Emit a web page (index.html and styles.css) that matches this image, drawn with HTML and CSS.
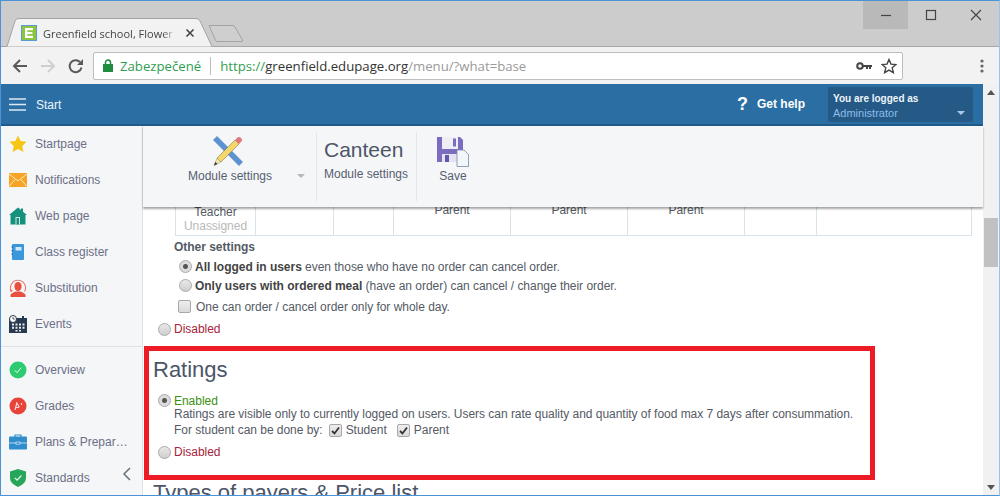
FILE: index.html
```html
<!DOCTYPE html>
<html lang="en">
<head>
<meta charset="utf-8">
<title>Greenfield school, Flower</title>
<link rel="stylesheet" href="styles.css">
</head>
<body>
<div class="window">
  <div class="tabstrip">
    <div class="tab">
      <svg class="tab-shape" width="214" height="29" viewBox="0 0 214 29"><path d="M0 28.500H6L14 3Q15 .5 18 .5H195Q198 .5 199 3L211 28.500H214" fill="#f2f2f2" stroke="#a3a3a3"/></svg>
      <svg class="favicon" width="16" height="16" viewBox="0 0 16 16"><rect x=".5" y=".5" width="15" height="15" fill="#8cc63f" stroke="#5b9bd5"/><path d="M4 3h8v2.2H6.4v1.7h5v2.2h-5v1.7H12V13H4z" fill="#fff"/></svg>
      <span class="tab-title">Greenfield school, Flower</span>
      <svg class="tab-close" width="10" height="10" viewBox="0 0 10 10"><path d="M1.500 1.500l7 7M8.500 1.500l-7 7" stroke="#444" stroke-width="1.600"/></svg>
    </div>
    <svg class="newtab" width="36" height="18" viewBox="0 0 36 18"><path d="M1 .5H25Q26 .5 27 2L34.500 15Q35 16.500 33 16.500H9Q8 16.500 7.500 15z" fill="#cfcfcf" stroke="#a3a3a3"/></svg>
    <div class="winctl">
      <span class="winbtn winbtn-hover"><svg width="12" height="12" viewBox="0 0 12 12"><path d="M1 6.500h10" stroke="#444" stroke-width="1.200"/></svg></span>
      <span class="winbtn"><svg width="12" height="12" viewBox="0 0 12 12"><rect x="1.500" y="1.500" width="9" height="9" fill="none" stroke="#444" stroke-width="1.200"/></svg></span>
      <span class="winbtn"><svg width="12" height="12" viewBox="0 0 12 12"><path d="M1 1l10 10M11 1L1 11" stroke="#444" stroke-width="1.200"/></svg></span>
    </div>
  </div>
  <div class="toolbar">
    <svg class="nav" width="16" height="16" viewBox="0 0 16 16"><path d="M15 8H2M8 2L2 8l6 6" fill="none" stroke="#5a5a5a" stroke-width="2"/></svg>
    <svg class="nav" width="16" height="16" viewBox="0 0 16 16"><path d="M1 8h13M8 2l6 6-6 6" fill="none" stroke="#cfcfcf" stroke-width="2"/></svg>
    <svg class="nav nav-last" width="16" height="16" viewBox="0 0 16 16"><path d="M13.500 9.500A6 6 0 1 1 12 4" fill="none" stroke="#5a5a5a" stroke-width="2"/><path d="M15 1v6H9z" fill="#5a5a5a"/></svg>
    <div class="omnibox">
      <svg width="10" height="13" viewBox="0 0 10 13"><rect x="0" y="5" width="10" height="8" fill="#1e8e3e"/><path d="M2.500 5.500V3.500a2.500 2.500 0 0 1 5 0v2" fill="none" stroke="#1e8e3e" stroke-width="1.500"/></svg>
      <span class="secure">Zabezpečené</span>
      <span class="omni-sep"></span>
      <span class="url"><span class="url-scheme">https://</span><span class="url-host">greenfield.edupage.org</span>/menu/?what=base</span>
      <svg class="omni-key" width="16" height="10" viewBox="0 0 16 10"><circle cx="4" cy="5" r="2.800" fill="none" stroke="#444" stroke-width="2"/><path d="M7 4h9v2h-1v2h-2V6h-1v2h-2V6H7z" fill="#444"/></svg>
      <svg class="omni-star" width="16" height="16" viewBox="0 0 16 16"><path d="M8 1.500l2 4.600 5 .4-3.800 3.300 1.200 4.900L8 12.100l-4.400 2.600 1.200-4.900L1 6.500l5-.4z" fill="none" stroke="#444" stroke-width="1.400"/></svg>
    </div>
    <svg class="menu-dots" width="4" height="14" viewBox="0 0 4 14"><circle cx="2" cy="2" r="1.600" fill="#666"/><circle cx="2" cy="7" r="1.600" fill="#666"/><circle cx="2" cy="12" r="1.600" fill="#666"/></svg>
  </div>
  <div class="viewport">
    <div class="page">
      <header class="appbar">
        <svg class="burger" width="17" height="13" viewBox="0 0 17 13"><path d="M0 1h17M0 6.500h17M0 12h17" stroke="#dce9f3" stroke-width="1.600"/></svg>
        <span class="appbar-start">Start</span>
        <span class="help-mark">?</span>
        <span class="help-text">Get help</span>
        <div class="login">
          <div class="login-title">You are logged as</div>
          <div class="login-name">Administrator</div>
          <span class="login-caret"></span>
        </div>
      </header>
      <div class="body">
        <nav class="sidebar">
          <a class="side-item"><svg width="18" height="18" viewBox="0 0 18 18"><path d="M9 .5l2.600 5.600 6 .7-4.400 4.100 1.200 6L9 14l-5.400 2.900 1.200-6L.4 6.800l6-.7z" fill="#f6c516"/></svg>Startpage</a>
          <a class="side-item"><svg width="18" height="18" viewBox="0 0 18 18"><rect y="2" width="18" height="14" fill="#f5a425"/><path d="M0 3l9 7 9-7M0 15.500l6.500-7.500M18 15.500L11.500 8" fill="none" stroke="#fde6bd" stroke-width="1"/></svg>Notifications</a>
          <a class="side-item"><svg width="18" height="18" viewBox="0 0 18 18"><path d="M9 .5l3 2.500V1.500h2v3.200l4 3.300h-1.500v9.500h-15V8H0z" fill="#14917d"/><rect x="6.500" y="10" width="4.500" height="7.500" fill="#cfe8e3"/><rect x="7.500" y="11" width="2.500" height="6.500" fill="#14917d"/></svg>Web page</a>
          <a class="side-item"><svg width="18" height="18" viewBox="0 0 18 18"><rect x="3" y="1" width="12" height="16" rx="1" fill="#3a97dc"/><rect x="2.500" y="3.500" width="1.500" height="1.200" fill="#1d6fae"/><rect x="2.500" y="7" width="1.500" height="1.200" fill="#1d6fae"/><rect x="2.500" y="10.500" width="1.500" height="1.200" fill="#1d6fae"/><rect x="6.500" y="4" width="6" height="3.500" fill="#d5e9f8"/></svg>Class register</a>
          <a class="side-item"><svg width="18" height="18" viewBox="0 0 18 18"><path d="M2.500 12.500a7.500 7.500 0 1 1 13 0" fill="none" stroke="#ee7a6b" stroke-width="1.100"/><path d="M.5 10.500l3.500.5-2 2.500z" fill="#ee7a6b"/><ellipse cx="9" cy="7.500" rx="3.600" ry="4.600" fill="#e9503e"/><path d="M1.500 18v-2q0-1.500 5-3.500h5q5 2 5 3.500v2z" fill="#e9503e"/></svg>Substitution</a>
          <a class="side-item"><svg width="18" height="18" viewBox="0 0 18 18"><rect y="3" width="18" height="15" fill="#2a3b4f"/><path d="M3 8.500h2v2H3zM6.500 8.500h2v2h-2zM10 8.500h2v2h-2zM13.500 8.500h2v2h-2zM3 11.800h2v2H3zM6.500 11.800h2v2h-2zM10 11.800h2v2h-2zM13.500 11.800h2v2h-2zM6.500 15h2v1.500h-2zM10 15h2v1.500h-2z" fill="#e8edf2"/><rect x="13" y="1" width="2" height="3.500" fill="#2a3b4f"/><circle cx="4" cy="4" r="3.500" fill="#fff" stroke="#2a3b4f"/><path d="M4 2v2h1.800" fill="none" stroke="#2a3b4f" stroke-width=".8"/></svg>Events</a>
          <div class="side-sep"></div>
          <a class="side-item"><svg width="18" height="18" viewBox="0 0 18 18"><circle cx="9" cy="9" r="8.500" fill="#2ecc71"/><path d="M5.800 9.300l2.200 2.300 4.200-4.800" fill="none" stroke="#e8f9ef" stroke-width="1"/></svg>Overview</a>
          <a class="side-item"><svg width="18" height="18" viewBox="0 0 18 18"><circle cx="9" cy="9" r="8.500" fill="#e8433a"/><path d="M6 13l1.800-7 2.600 4.200M7 10.500h3M12.500 6v2" fill="none" stroke="#fbdcd9" stroke-width="1.100"/></svg>Grades</a>
          <a class="side-item"><svg width="18" height="18" viewBox="0 0 18 18"><path d="M6 4V2h6v2" fill="none" stroke="#2f8dcb" stroke-width="1.200"/><rect y="3.500" width="18" height="13" rx="1" fill="#2f8dcb"/><path d="M0 10h18" stroke="#d8ecf8" stroke-width=".8"/><rect x="7" y="9" width="4" height="2.200" fill="#2f8dcb" stroke="#d8ecf8" stroke-width=".7"/></svg>Plans &amp; Prepar…</a>
          <a class="side-item"><svg width="18" height="18" viewBox="0 0 18 18"><path d="M9 0l8 2.500V9q0 5.500-8 9-8-3.500-8-9V2.500z" fill="#26a65b"/><path d="M5.800 8.800l2.300 2.300 4.300-4.600" fill="none" stroke="#e8f9ef" stroke-width="1.200"/></svg>Standards</a>
          <svg class="side-collapse" width="9" height="14" viewBox="0 0 9 14"><path d="M8 1L2 7l6 6" fill="none" stroke="#66707c" stroke-width="1.500"/></svg>
        </nav>
        <main class="main">
          <div class="ribbon">
            <div class="rb-group rb-module">
              <svg width="30" height="30" viewBox="0 0 30 30"><path d="M4 .5L.5 4 26 29.500l3.500-3.500z" fill="#5b92d6" stroke="#4573ac" stroke-width=".6"/><path d="M4 22L22 4l4 4L8 26z" fill="#f5d66c" stroke="#8a7a3a" stroke-width=".6"/><path d="M22 4l2-2a2.500 2.500 0 0 1 4 4l-2 2z" fill="#e0787c"/><path d="M4 22l-3 7.500L8 26z" fill="#f0e2b8" stroke="#8a7a3a" stroke-width=".4"/><path d="M2.300 26l-1.300 3.500L4.500 28z" fill="#333"/></svg>
              <div class="rb-label-row"><span class="rb-label">Module settings</span><span class="rb-caret"></span></div>
            </div>
            <div class="rb-group rb-title">
              <div class="rb-big">Canteen</div>
              <div class="rb-label">Module settings</div>
            </div>
            <div class="rb-group rb-save">
              <svg width="32" height="31" viewBox="0 0 32 31"><path d="M0 1h23l3 3v22H0z" fill="#7b6cc0"/><rect x="5" y="1" width="16" height="12" fill="#eeeef6"/><rect x="16" y="2.500" width="3" height="8" fill="#7b6cc0"/><rect x="5" y="18" width="15" height="8" fill="#e4e2f2"/><rect x="8" y="19" width="4" height="7" fill="#6258a8"/><path d="M20 14h7l4.500 4.500V30.500H20z" fill="#f2f5fa" stroke="#7c88a8" stroke-width=".8"/></svg>
              <div class="rb-label">Save</div>
            </div>
          </div>
          <div class="scroll">
            <table class="grid">
              <tr>
                <td class="c1"><div>Teacher</div><div class="muted">Unassigned</div></td>
                <td class="c2"></td>
                <td class="c3"></td>
                <td class="c4 top">Parent</td>
                <td class="c4 top">Parent</td>
                <td class="c4 top">Parent</td>
                <td class="c5"></td>
                <td></td>
              </tr>
            </table>
            <h4 class="other-title">Other settings</h4>
            <div class="opt opt-r1"><span class="radio on"></span><span><b>All logged in users</b> even those who have no order can cancel order.</span></div>
            <div class="opt opt-r2"><span class="radio"></span><span><b>Only users with ordered meal</b> (have an order) can cancel / change their order.</span></div>
            <div class="opt opt-c"><span class="check"></span><span>One can order / cancel order only for whole day.</span></div>
            <div class="off-row"><span class="radio"></span><span class="red">Disabled</span></div>
            <section class="ratings">
              <h2 class="h2">Ratings</h2>
              <div class="en-row"><span class="radio on"></span><span class="green">Enabled</span></div>
              <div class="indent">Ratings are visible only to currently logged on users. Users can rate quality and quantity of food max 7 days after consummation.</div>
              <div class="indent for-row">For student can be done by:
                <span class="check on"><svg width="9" height="9" viewBox="0 0 9 9"><path d="M1 5l2.500 2.500L8 1.500" fill="none" stroke="#333" stroke-width="1.800"/></svg></span><span>Student</span>
                <span class="check on second"><svg width="9" height="9" viewBox="0 0 9 9"><path d="M1 5l2.500 2.500L8 1.500" fill="none" stroke="#333" stroke-width="1.800"/></svg></span><span>Parent</span>
              </div>
              <div class="off-row2"><span class="radio"></span><span class="red">Disabled</span></div>
            </section>
            <h2 class="h2 next">Types of payers &amp; Price list</h2>
          </div>
        </main>
      </div>
    </div>
    <div class="scrollbar">
      <span class="sb-up"></span>
      <span class="sb-thumb"></span>
      <span class="sb-down"></span>
    </div>
  </div>
</div>
</body>
</html>
```

FILE: styles.css
```css
* { box-sizing: border-box; }
html, body { margin: 0; padding: 0; height: 100%; overflow: hidden; }
body { font-family: "Liberation Sans", Arial, sans-serif; font-size: 12px; color: #555a64; background: #fff; }
.window { width: 1000px; height: 496px; border: 1px solid #4b93d8; border-right-color: #9cc3e6; display: flex; flex-direction: column; overflow: hidden; background: #fff; }

.tabstrip { height: 46px; flex: none; background: #cccccc; border-bottom: 1px solid #a8a8a8; display: flex; align-items: flex-end; position: relative; }
.tab { width: 214px; height: 29px; margin-bottom: -1px; position: relative; display: flex; align-items: center; padding: 1px 0 0 20px; color: #444; font-family: "Open Sans", sans-serif; font-size: 11px; }
.tab-shape { position: absolute; left: 0; top: 0; }
.favicon, .tab-title, .tab-close { position: relative; }
.tab-title { margin-left: 6px; width: 133px; white-space: nowrap; overflow: hidden; -webkit-mask-image: linear-gradient(to right, #000 90%, transparent); mask-image: linear-gradient(to right, #000 90%, transparent); }
.tab-close { margin-left: 9px; }
.newtab { margin: 0 0 3px -7px; }
.winctl { position: absolute; right: 1px; top: 0; display: flex; }
.winbtn { width: 45px; height: 28px; display: flex; align-items: center; justify-content: center; }
.winbtn-hover { background: #b9b9b9; }

.toolbar { height: 37px; flex: none; background: #f2f2f2; display: flex; align-items: center; padding-left: 11px; }
.nav { margin-right: 12px; }
.nav-last { margin-right: 9px; }
.omnibox { width: 810px; height: 28px; background: #fff; border: 1px solid #bdbdbd; border-radius: 2px; display: flex; align-items: center; padding-left: 9px; font-family: "Open Sans", sans-serif; font-size: 13.200px; color: #9a9a9a; white-space: nowrap; }
.secure { color: #2f9e50; margin-left: 7px; }
.omni-sep { width: 1px; height: 18px; background: #bbb; margin: 0 9px; }
.url-scheme { color: #2f9e50; }
.url-host { color: #333; }
.omni-key { margin-left: auto; }
.omni-star { margin: 0 5px 0 9px; }
.menu-dots { margin-left: 77px; }

.viewport { flex: 1; display: flex; min-height: 0; }
.page { width: 982px; display: flex; flex-direction: column; min-height: 0; }
.scrollbar { flex: 1; background: #f1f1f1; position: relative; display: flex; flex-direction: column; align-items: center; }
.sb-up { margin-top: 6px; border: 4px solid transparent; border-top: 0; border-bottom: 5px solid #555; }
.sb-thumb { width: 14px; height: 49px; margin-top: 123px; background: #c1c1c1; }
.sb-down { margin-top: auto; margin-bottom: 5px; border: 4px solid transparent; border-bottom: 0; border-top: 5px solid #555; }

.appbar { height: 42px; flex: none; background: #2b6ea3; border-bottom: 2px solid #1f5a88; display: flex; align-items: center; padding-left: 8px; color: #fff; font-size: 12px; }
.burger { margin-right: 10px; }
.appbar-start { color: #eef5fb; margin-top: 1px; }
.help-mark { margin-left: auto; font-weight: bold; font-size: 18px; margin-right: 9px; margin-top: 1px; }
.help-text { font-weight: bold; margin-right: 23px; margin-top: -1px; }
.login { width: 145px; height: 35px; background: #245a85; border-radius: 2px; margin: 0 10px 0 0; padding: 5px 5px; position: relative; }
.login-title { font-weight: bold; font-size: 10px; line-height: 13px; color: #eef5fb; }
.login-name { font-size: 11px; line-height: 15px; margin-top: 1px; color: #8dbdea; }
.login-caret { position: absolute; right: 8px; top: 24px; border: 4px solid transparent; border-bottom: 0; border-top: 4px solid #a9c9e6; }

.body { flex: 1; display: flex; min-height: 0; }
.sidebar { width: 142px; flex: none; background: #f5f6f8; border-right: 1px solid #dfe1e4; position: relative; color: #6c7086; overflow: hidden; }
.side-item { height: 36px; display: flex; align-items: center; gap: 8px; padding-left: 8px; }
.side-item svg { flex: none; }
.side-sep { height: 1px; background: #dfe1e4; margin: 4px 0 5px; }
.side-collapse { position: absolute; left: 121px; top: 341px; }

.main { flex: 1; min-width: 0; display: flex; flex-direction: column; position: relative; }
.ribbon { height: 81px; flex: none; background: #f5f6f8; display: flex; position: relative; z-index: 1; box-shadow: 0 2px 2px rgba(0,0,0,.35); color: #555f70; padding-top: 6px; }
.rb-group { height: 69px; border-right: 1px solid #e3e5e8; display: flex; flex-direction: column; align-items: center; }
.rb-group svg { margin-top: 4px; flex: none; }
.rb-module { width: 174px; padding-right: 4px; }
.rb-label-row { align-self: flex-start; display: flex; align-items: center; padding-left: 45px; margin-top: 2px; }
.rb-label { line-height: 16px; white-space: nowrap; }
.rb-caret { margin-left: 25px; border: 4px solid transparent; border-bottom: 0; border-top: 4px solid #b4b8be; }
.rb-title { width: 100px; align-items: flex-start; padding-left: 7px; }
.rb-big { font-size: 21px; line-height: 26px; margin-top: 5px; margin-bottom: 3px; color: #4c5668; }
.rb-save { width: 72px; border: 0; padding-left: 0; }
.rb-save .rb-label { margin-top: 1px; }

.scroll { flex: 1; min-height: 0; overflow: hidden; padding-left: 1px; letter-spacing: -.03px; }
.grid { width: 797px; height: 29px; margin-left: 31px; border-collapse: collapse; table-layout: fixed; border: 1px solid #d8e3ea; border-top: 0; }
.grid td { border-left: 1px solid #d8e3ea; padding: 0; text-align: center; vertical-align: top; line-height: 14px; color: #555a64; overflow: hidden; }
.grid td.c1 { width: 80px; }
.grid td.c1 div:first-child { margin-top: -2px; }
.grid td.c2 { width: 78px; }
.grid td.c3 { width: 60px; }
.grid td.c4 { width: 117px; line-height: 6px; }
.grid td.c5 { width: 72px; }
.muted { color: #b9b9b9; }
.other-title { margin: 4px 0 0 30px; font-size: 12px; font-weight: bold; line-height: 14px; color: #555a64; }
.opt { display: flex; align-items: center; gap: 3px; margin-left: 35px; height: 19px; }
.opt b { color: #444; }
.opt-r1 { margin-top: 3px; }
.opt-c { margin-top: 1px; height: 21px; gap: 5px; margin-left: 34px; }
.off-row { display: flex; align-items: center; gap: 3px; margin-left: 14px; height: 20px; margin-top: 2px; }
.radio { width: 13px; height: 13px; border-radius: 50%; border: 1px solid #aaa; background: linear-gradient(#e8e8e8, #cfcfcf); flex: none; display: inline-block; }
.radio.on { background: radial-gradient(circle, #555 0 2px, #dcdcdc 3px); }
.check { width: 13px; height: 13px; border: 1px solid #a8a8a8; border-radius: 2px; background: linear-gradient(#eee, #dadada); display: inline-flex; align-items: center; justify-content: center; flex: none; }
.red { color: #a8233a; }
.green { color: #3d8f12; }

.ratings { width: 731px; height: 134px; border: 5px solid #ed1c24; margin-top: 7px; padding: 6px 0 0 4px; }
.h2 { margin: 0; font-size: 22px; font-weight: normal; line-height: 26px; color: #4c5668; letter-spacing: 0; }
.en-row { display: flex; align-items: center; gap: 3px; margin: 11px 0 0 5px; height: 13px; }
.indent { margin-left: 21px; line-height: 14px; white-space: nowrap; }
.for-row { display: flex; align-items: center; gap: 4px; margin-top: 1px; height: 16px; }
.for-row .check { margin-left: 2px; }
.for-row .second { margin-left: 6px; }
.off-row2 { display: flex; align-items: center; gap: 3px; margin: 6px 0 0 5px; height: 16px; }
.next { margin: 0 0 0 9px; white-space: nowrap; }
```
